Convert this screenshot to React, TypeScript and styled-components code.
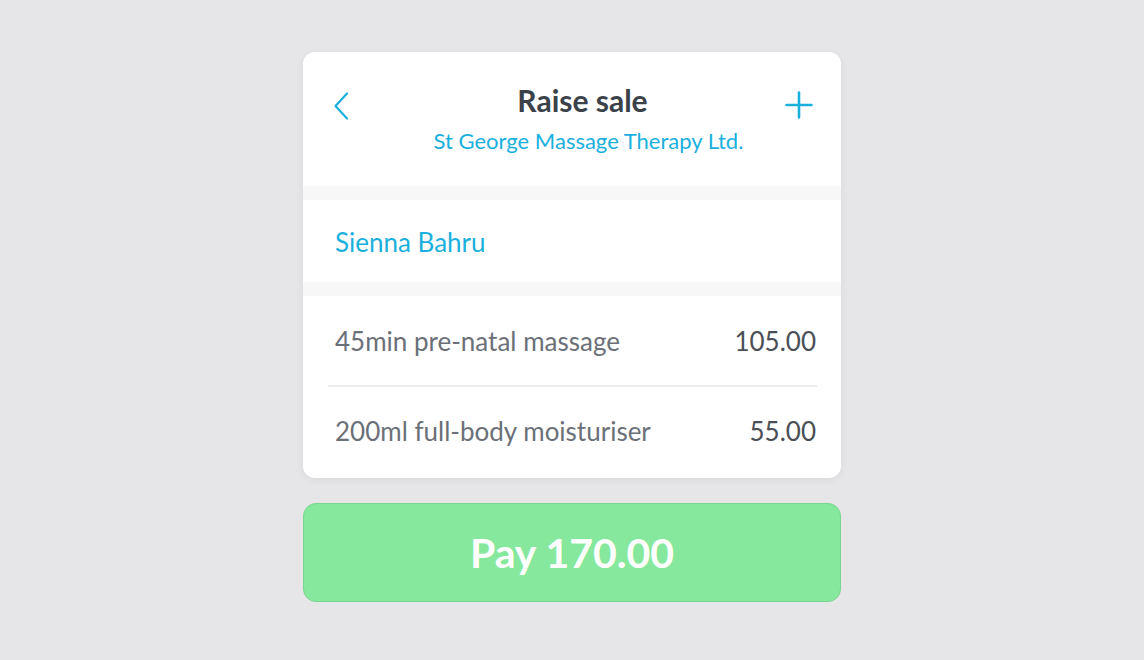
import * as React from 'react'
import styled, { createGlobalStyle } from 'styled-components'

const GlobalStyle = createGlobalStyle`
  html, body {
    margin: 0;
    padding: 0;
    background: #e6e6e8;
    font-family: Lato, "Open Sans", sans-serif;
  }
`

const Page = styled.div`
  width: 1144px;
  height: 660px;
  display: flex;
  justify-content: center;
  padding-top: 52px;
  box-sizing: border-box;
`

const Column = styled.div`
  width: 538px;
  display: flex;
  flex-direction: column;
  gap: 25px;
`

const Card = styled.div`
  background: #fff;
  border-radius: 12px;
  overflow: hidden;
  box-shadow: 0 2px 8px rgba(0, 0, 0, 0.06);
`

const Header = styled.div`
  height: 134px;
  display: grid;
  grid-template-columns: 60px 1fr 60px;
  align-items: start;
  box-sizing: border-box;
  padding-top: 31px;
`

const HeaderTitles = styled.div`
  display: flex;
  flex-direction: column;
  align-items: center;
  padding-left: 33px;
`

const Title = styled.h1`
  margin: 0;
  font-size: 30px;
  font-weight: 700;
  color: #3a4149;
  line-height: 34px;
  transform: translateX(-6px);
`

const Subtitle = styled.div`
  margin-top: 11px;
  font-size: 22px;
  color: #1ab0de;
  line-height: 26px;
`

const IconButton = styled.button<{ side: 'left' | 'right' }>`
  border: none;
  background: none;
  padding: 0;
  margin-top: ${({ side }) => (side === 'left' ? '9px' : '8px')};
  display: flex;
  justify-content: ${({ side }) => (side === 'left' ? 'flex-start' : 'flex-end')};
  padding-left: ${({ side }) => (side === 'left' ? '30px' : '0')};
  padding-right: ${({ side }) => (side === 'right' ? '28px' : '0')};
  cursor: pointer;
`

const Band = styled.div`
  height: 14px;
  background: #f7f7f8;
`

const Customer = styled.div`
  height: 82px;
  display: flex;
  align-items: center;
  padding: 1px 32px 0;
  box-sizing: border-box;
  font-size: 26px;
  color: #1ab0de;
`

const Items = styled.ul`
  list-style: none;
  margin: 0;
  padding: 0 24px 0 25px;
`

const Item = styled.li`
  height: 89px;
  display: flex;
  justify-content: space-between;
  align-items: center;
  padding: 0 1px 0 7px;
  font-size: 26px;
  & + & {
    height: 93px;
    padding-bottom: 4px;
    box-sizing: border-box;
    border-top: 2px solid #ececee;
  }
`

const ItemName = styled.span`
  color: #6b7078;
`

const ItemPrice = styled.span`
  color: #4a4f56;
`

const PayButton = styled.button`
  height: 99px;
  border: 1px solid #78d690;
  border-radius: 13px;
  background: #86e89c;
  color: #fff;
  font-family: Lato, "Open Sans", sans-serif;
  font-size: 41px;
  font-weight: 700;
  cursor: pointer;
`

const items = [
  { name: '45min pre-natal massage', price: '105.00' },
  { name: '200ml full-body moisturiser', price: '55.00' },
]

export default function App() {
  return (
    <>
      <GlobalStyle />
      <Page>
        <Column>
          <Card>
            <Header>
              <IconButton side="left" aria-label="Back">
                <svg width="16" height="28" viewBox="0 0 16 28" fill="none">
                  <path d="M14 1.5L2.5 14L14 26.5" stroke="#1ab0de" strokeWidth="2.2" strokeLinecap="round" strokeLinejoin="round" />
                </svg>
              </IconButton>
              <HeaderTitles>
                <Title>Raise sale</Title>
                <Subtitle>St George Massage Therapy Ltd.</Subtitle>
              </HeaderTitles>
              <IconButton side="right" aria-label="Add">
                <svg width="28" height="28" viewBox="0 0 28 28" fill="none">
                  <path d="M14 1.5V26.5M1.5 14H26.5" stroke="#1ab0de" strokeWidth="2.6" strokeLinecap="round" />
                </svg>
              </IconButton>
            </Header>
            <Band />
            <Customer>Sienna Bahru</Customer>
            <Band />
            <Items>
              {items.map(({ name, price }) => (
                <Item key={name}>
                  <ItemName>{name}</ItemName>
                  <ItemPrice>{price}</ItemPrice>
                </Item>
              ))}
            </Items>
          </Card>
          <PayButton>Pay 170.00</PayButton>
        </Column>
      </Page>
    </>
  )
}
